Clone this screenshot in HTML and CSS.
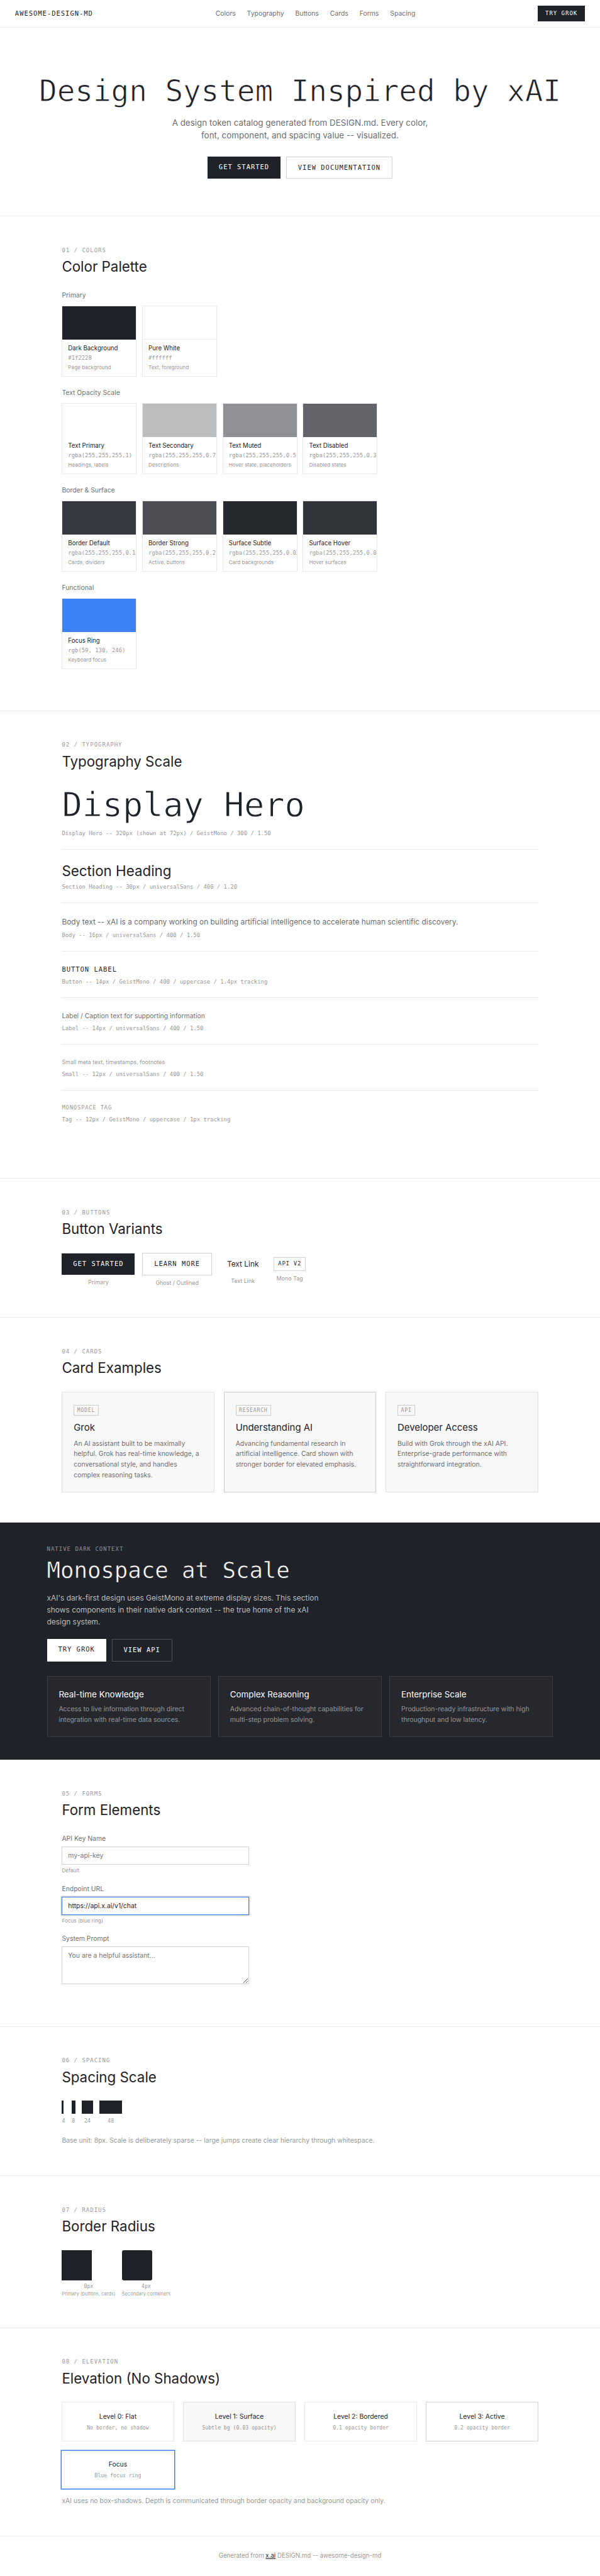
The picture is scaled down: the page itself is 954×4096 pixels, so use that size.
FILE: index.html
```html
<!DOCTYPE html>
<html lang="en">
<head>
    <meta charset="UTF-8">
    <meta name="viewport" content="width=device-width, initial-scale=1.0">
    <title>Design System Inspired by xAI</title>
    <link rel="stylesheet" href="styles.css">
</head>
<body>
<div class="page">
    <nav class="nav">
        <div class="nav-logo">awesome-design-md</div>
        <div class="nav-links">
            <a href="#colors">Colors</a>
            <a href="#typography">Typography</a>
            <a href="#buttons">Buttons</a>
            <a href="#cards">Cards</a>
            <a href="#forms">Forms</a>
            <a href="#spacing">Spacing</a>
        </div>
        <a class="btn btn-primary btn-small" href="#">Try Grok</a>
    </nav>

    <header class="hero">
        <h1>Design System Inspired by xAI</h1>
        <p>A design token catalog generated from DESIGN.md. Every color, font, component, and spacing value -- visualized.</p>
        <div class="hero-buttons">
            <a class="btn btn-primary" href="#">Get Started</a>
            <a class="btn btn-ghost" href="#">View Documentation</a>
        </div>
    </header>

    <!-- Colors -->
    <section class="section" id="colors">
        <div class="inner">
            <div class="section-label">01 / Colors</div>
            <h2>Color Palette</h2>

            <h3 class="group-title">Primary</h3>
            <div class="swatches">
                <div class="swatch">
                    <div class="swatch-color dark"></div>
                    <div class="swatch-info">
                        <div class="swatch-name">Dark Background</div>
                        <div class="swatch-hex">#1f2228</div>
                        <div class="swatch-role">Page background</div>
                    </div>
                </div>
                <div class="swatch">
                    <div class="swatch-color white lined"></div>
                    <div class="swatch-info">
                        <div class="swatch-name">Pure White</div>
                        <div class="swatch-hex">#ffffff</div>
                        <div class="swatch-role">Text, foreground</div>
                    </div>
                </div>
            </div>

            <h3 class="group-title">Text Opacity Scale</h3>
            <div class="swatches">
                <div class="swatch">
                    <div class="swatch-color white"></div>
                    <div class="swatch-info">
                        <div class="swatch-name">Text Primary</div>
                        <div class="swatch-hex">rgba(255,255,255,1)</div>
                        <div class="swatch-role">Headings, labels</div>
                    </div>
                </div>
                <div class="swatch">
                    <div class="swatch-color secondary"></div>
                    <div class="swatch-info">
                        <div class="swatch-name">Text Secondary</div>
                        <div class="swatch-hex">rgba(255,255,255,0.7)</div>
                        <div class="swatch-role">Descriptions</div>
                    </div>
                </div>
                <div class="swatch">
                    <div class="swatch-color muted"></div>
                    <div class="swatch-info">
                        <div class="swatch-name">Text Muted</div>
                        <div class="swatch-hex">rgba(255,255,255,0.5)</div>
                        <div class="swatch-role">Hover state, placeholders</div>
                    </div>
                </div>
                <div class="swatch">
                    <div class="swatch-color disabled"></div>
                    <div class="swatch-info">
                        <div class="swatch-name">Text Disabled</div>
                        <div class="swatch-hex">rgba(255,255,255,0.3)</div>
                        <div class="swatch-role">Disabled states</div>
                    </div>
                </div>
            </div>

            <h3 class="group-title">Border &amp; Surface</h3>
            <div class="swatches">
                <div class="swatch">
                    <div class="swatch-color border-default"></div>
                    <div class="swatch-info">
                        <div class="swatch-name">Border Default</div>
                        <div class="swatch-hex">rgba(255,255,255,0.1)</div>
                        <div class="swatch-role">Cards, dividers</div>
                    </div>
                </div>
                <div class="swatch">
                    <div class="swatch-color border-strong"></div>
                    <div class="swatch-info">
                        <div class="swatch-name">Border Strong</div>
                        <div class="swatch-hex">rgba(255,255,255,0.2)</div>
                        <div class="swatch-role">Active, buttons</div>
                    </div>
                </div>
                <div class="swatch">
                    <div class="swatch-color surface-subtle"></div>
                    <div class="swatch-info">
                        <div class="swatch-name">Surface Subtle</div>
                        <div class="swatch-hex">rgba(255,255,255,0.03)</div>
                        <div class="swatch-role">Card backgrounds</div>
                    </div>
                </div>
                <div class="swatch">
                    <div class="swatch-color surface-hover"></div>
                    <div class="swatch-info">
                        <div class="swatch-name">Surface Hover</div>
                        <div class="swatch-hex">rgba(255,255,255,0.08)</div>
                        <div class="swatch-role">Hover surfaces</div>
                    </div>
                </div>
            </div>

            <h3 class="group-title">Functional</h3>
            <div class="swatches">
                <div class="swatch">
                    <div class="swatch-color focus"></div>
                    <div class="swatch-info">
                        <div class="swatch-name">Focus Ring</div>
                        <div class="swatch-hex">rgb(59, 130, 246)</div>
                        <div class="swatch-role">Keyboard focus</div>
                    </div>
                </div>
            </div>
        </div>
    </section>

    <!-- Typography -->
    <section class="section" id="typography">
        <div class="inner">
            <div class="section-label">02 / Typography</div>
            <h2>Typography Scale</h2>
            <div class="type-item">
                <div class="type-display">Display Hero</div>
                <div class="type-meta">Display Hero -- 320px (shown at 72px) / GeistMono / 300 / 1.50</div>
            </div>
            <div class="type-item">
                <div class="type-heading">Section Heading</div>
                <div class="type-meta">Section Heading -- 30px / universalSans / 400 / 1.20</div>
            </div>
            <div class="type-item">
                <div class="type-body">Body text -- xAI is a company working on building artificial intelligence to accelerate human scientific discovery.</div>
                <div class="type-meta">Body -- 16px / universalSans / 400 / 1.50</div>
            </div>
            <div class="type-item">
                <div class="type-button">Button Label</div>
                <div class="type-meta">Button -- 14px / GeistMono / 400 / uppercase / 1.4px tracking</div>
            </div>
            <div class="type-item">
                <div class="type-label">Label / Caption text for supporting information</div>
                <div class="type-meta">Label -- 14px / universalSans / 400 / 1.50</div>
            </div>
            <div class="type-item">
                <div class="type-small">Small meta text, timestamps, footnotes</div>
                <div class="type-meta">Small -- 12px / universalSans / 400 / 1.50</div>
            </div>
            <div class="type-item">
                <div class="type-tag">Monospace Tag</div>
                <div class="type-meta">Tag -- 12px / GeistMono / uppercase / 1px tracking</div>
            </div>
        </div>
    </section>

    <!-- Buttons -->
    <section class="section" id="buttons">
        <div class="inner">
            <div class="section-label">03 / Buttons</div>
            <h2>Button Variants</h2>
            <div class="button-row">
                <div class="button-item">
                    <a class="btn btn-primary" href="#">Get Started</a>
                    <span class="button-caption">Primary</span>
                </div>
                <div class="button-item">
                    <a class="btn btn-ghost" href="#">Learn More</a>
                    <span class="button-caption">Ghost / Outlined</span>
                </div>
                <div class="button-item">
                    <a class="text-link" href="#">Text Link</a>
                    <span class="button-caption">Text Link</span>
                </div>
                <div class="button-item">
                    <span class="mono-tag">API v2</span>
                    <span class="button-caption">Mono Tag</span>
                </div>
            </div>
        </div>
    </section>

    <!-- Cards -->
    <section class="section" id="cards">
        <div class="inner">
            <div class="section-label">04 / Cards</div>
            <h2>Card Examples</h2>
            <div class="cards">
                <div class="card">
                    <span class="card-tag">Model</span>
                    <h3>Grok</h3>
                    <p>An AI assistant built to be maximally helpful. Grok has real-time knowledge, a conversational style, and handles complex reasoning tasks.</p>
                </div>
                <div class="card card-strong">
                    <span class="card-tag">Research</span>
                    <h3>Understanding AI</h3>
                    <p>Advancing fundamental research in artificial intelligence. Card shown with stronger border for elevated emphasis.</p>
                </div>
                <div class="card">
                    <span class="card-tag">API</span>
                    <h3>Developer Access</h3>
                    <p>Build with Grok through the xAI API. Enterprise-grade performance with straightforward integration.</p>
                </div>
            </div>
        </div>
    </section>

    <!-- Dark context -->
    <section class="dark-section">
        <div class="dark-inner">
            <div class="section-label">Native Dark Context</div>
            <h2>Monospace at Scale</h2>
            <p class="dark-text">xAI's dark-first design uses GeistMono at extreme display sizes. This section shows components in their native dark context -- the true home of the xAI design system.</p>
            <div class="dark-buttons">
                <a class="btn btn-white" href="#">Try Grok</a>
                <a class="btn btn-ghost-dark" href="#">View API</a>
            </div>
            <div class="dark-cards">
                <div class="dark-card">
                    <h3>Real-time Knowledge</h3>
                    <p>Access to live information through direct integration with real-time data sources.</p>
                </div>
                <div class="dark-card">
                    <h3>Complex Reasoning</h3>
                    <p>Advanced chain-of-thought capabilities for multi-step problem solving.</p>
                </div>
                <div class="dark-card">
                    <h3>Enterprise Scale</h3>
                    <p>Production-ready infrastructure with high throughput and low latency.</p>
                </div>
            </div>
        </div>
    </section>

    <!-- Forms -->
    <section class="section" id="forms">
        <div class="inner">
            <div class="section-label">05 / Forms</div>
            <h2>Form Elements</h2>
            <div class="form">
                <div class="field">
                    <label for="key">API Key Name</label>
                    <input type="text" id="key" placeholder="my-api-key">
                    <div class="hint">Default</div>
                </div>
                <div class="field">
                    <label for="url">Endpoint URL</label>
                    <input type="text" id="url" class="focused" value="https://api.x.ai/v1/chat">
                    <div class="hint">Focus (blue ring)</div>
                </div>
                <div class="field">
                    <label for="prompt">System Prompt</label>
                    <textarea id="prompt" placeholder="You are a helpful assistant..."></textarea>
                </div>
            </div>
        </div>
    </section>

    <!-- Spacing -->
    <section class="section" id="spacing">
        <div class="inner">
            <div class="section-label">06 / Spacing</div>
            <h2>Spacing Scale</h2>
            <div class="spacing-row">
                <div class="space-item"><div class="space-bar w4"></div>4</div>
                <div class="space-item"><div class="space-bar w8"></div>8</div>
                <div class="space-item"><div class="space-bar w24"></div>24</div>
                <div class="space-item"><div class="space-bar w48"></div>48</div>
            </div>
            <p class="note note-spacing">Base unit: 8px. Scale is deliberately sparse -- large jumps create clear hierarchy through whitespace.</p>
        </div>
    </section>

    <!-- Radius -->
    <section class="section" id="radius">
        <div class="inner">
            <div class="section-label">07 / Radius</div>
            <h2>Border Radius</h2>
            <div class="radius-row">
                <div class="radius-item">
                    <div class="radius-box"></div>
                    <div class="radius-value">0px</div>
                    <div class="radius-use">Primary (buttons, cards)</div>
                </div>
                <div class="radius-item">
                    <div class="radius-box rounded"></div>
                    <div class="radius-value">4px</div>
                    <div class="radius-use">Secondary containers</div>
                </div>
            </div>
        </div>
    </section>

    <!-- Elevation -->
    <section class="section" id="elevation">
        <div class="inner">
            <div class="section-label">08 / Elevation</div>
            <h2>Elevation (No Shadows)</h2>
            <div class="levels">
                <div class="level">
                    <div class="level-name">Level 0: Flat</div>
                    <div class="level-meta">No border, no shadow</div>
                </div>
                <div class="level level-surface">
                    <div class="level-name">Level 1: Surface</div>
                    <div class="level-meta">Subtle bg (0.03 opacity)</div>
                </div>
                <div class="level">
                    <div class="level-name">Level 2: Bordered</div>
                    <div class="level-meta">0.1 opacity border</div>
                </div>
                <div class="level level-active">
                    <div class="level-name">Level 3: Active</div>
                    <div class="level-meta">0.2 opacity border</div>
                </div>
                <div class="level level-focus">
                    <div class="level-name">Focus</div>
                    <div class="level-meta">Blue focus ring</div>
                </div>
            </div>
            <p class="note">xAI uses no box-shadows. Depth is communicated through border opacity and background opacity only.</p>
        </div>
    </section>

    <footer class="footer">
        Generated from <a href="#">x.ai</a> DESIGN.md -- awesome-design-md
    </footer>
</div>
</body>
</html>
```

FILE: styles.css
```css
:root {
    --dark: #1f2228;
    --text-secondary: rgba(31, 34, 40, 0.7);
    --text-muted: rgba(31, 34, 40, 0.5);
    --border: rgba(31, 34, 40, 0.1);
    --border-strong: rgba(31, 34, 40, 0.2);
    --surface: rgba(31, 34, 40, 0.03);
    --focus: rgb(59, 130, 246);
    --sans: Inter, "Liberation Sans", sans-serif;
    --mono: "DejaVu Sans Mono", "Liberation Mono", monospace;
}

* {
    box-sizing: border-box;
    margin: 0;
    padding: 0;
}

body {
    font-family: var(--sans);
    font-size: 16px;
    line-height: 1.5;
    color: var(--dark);
    background: #fff;
}

/* sizes below are for a 1280px wide page */
.page {
    zoom: 0.7453;
}

a {
    color: inherit;
    text-decoration: none;
}

h1, h2, h3 {
    font-weight: 400;
}

/* Nav */
.nav {
    display: flex;
    justify-content: space-between;
    align-items: center;
    padding: 12px 32px 11.7px;
    border-bottom: 1px solid var(--border);
}

.nav-logo {
    font-family: var(--mono);
    font-size: 14px;
    letter-spacing: 1.37px;
    text-transform: uppercase;
}

.nav-links {
    display: flex;
    gap: 24px;
    font-size: 14px;
    color: var(--text-secondary);
}

/* Buttons */
.btn {
    display: block;
    padding: 12px 24px;
    font-family: var(--mono);
    font-size: 14px;
    letter-spacing: 1.37px;
    text-transform: uppercase;
    white-space: nowrap;
}

.btn-primary {
    background: var(--dark);
    color: #fff;
}

.btn-small {
    padding: 8px 16px;
    font-size: 12px;
}

.btn-ghost {
    border: 1px solid var(--border-strong);
}

.btn-white {
    background: #fff;
    color: var(--dark);
}

.btn-ghost-dark {
    border: 1px solid rgba(255, 255, 255, 0.2);
    color: #fff;
}

/* Hero */
.hero {
    padding: 96px 32px 79.3px;
    text-align: center;
    border-bottom: 1px solid var(--border);
}

.hero h1 {
    margin-bottom: 16px;
    font-family: var(--mono);
    font-size: 64px;
    line-height: 1.2;
    letter-spacing: -0.13px;
    white-space: nowrap;
    -webkit-text-stroke: 1.2px #fff;
}

.hero p {
    max-width: 560px;
    margin: 0 auto 32px;
    font-size: 18px;
    color: var(--text-secondary);
}

.hero-buttons {
    display: flex;
    justify-content: center;
    gap: 12px;
}

/* Sections */
.section {
    padding: 64px 0 63.7px;
    border-bottom: 1px solid var(--border);
}

.inner {
    max-width: 1080px;
    margin: 0 auto;
    padding: 0 32px;
}

.section-label {
    margin-bottom: 8px;
    font-family: var(--mono);
    font-size: 12px;
    letter-spacing: 1.38px;
    text-transform: uppercase;
    color: var(--text-muted);
}

.section h2 {
    margin-bottom: 32px;
    font-size: 30px;
    line-height: 1.2;
}

/* Color swatches */
.group-title {
    margin-bottom: 10.5px;
    font-size: 14px;
    color: var(--text-secondary);
}

.swatches {
    display: grid;
    grid-template-columns: repeat(6, 1fr);
    gap: 12px;
    margin-bottom: 24px;
}

.swatch {
    height: 152.5px;
    border: 1px solid var(--border);
    overflow: hidden;
}

.swatch-color {
    height: 72px;
}

.swatch-color.dark { background: #1f2228; }
.swatch-color.white { background: #fff; }
.swatch-color.lined { border-bottom: 1px solid var(--border); }
.swatch-color.secondary { background: #bcbdbf; }
.swatch-color.muted { background: #8f9194; }
.swatch-color.disabled { background: #626469; }
.swatch-color.border-default { background: #35383e; }
.swatch-color.border-strong { background: #4c4e53; }
.swatch-color.surface-subtle { background: #26292e; }
.swatch-color.surface-hover { background: #313439; }
.swatch-color.focus { background: var(--focus); }

.swatch-info {
    padding: 9.5px 12px;
}

.swatch-name {
    font-size: 13px;
}

.swatch-hex {
    margin: 1.5px 0 2.5px;
    font-family: var(--mono);
    font-size: 12px;
    letter-spacing: -0.03px;
    color: var(--text-muted);
}

.swatch-role {
    font-size: 11px;
    color: var(--text-muted);
    white-space: nowrap;
}

/* Type scale */
.type-item {
    margin-bottom: 28px;
    padding-bottom: 23.7px;
    border-bottom: 1px solid var(--border);
}

.type-item:last-child {
    border-bottom: none;
}

.type-meta {
    margin-top: 8px;
    font-family: var(--mono);
    font-size: 12px;
    letter-spacing: -0.03px;
    color: var(--text-muted);
}

.type-display {
    font-family: var(--mono);
    font-size: 72px;
    line-height: 1.2;
    letter-spacing: -0.15px;
    -webkit-text-stroke: 1.3px #fff;
}

.type-heading {
    font-size: 30px;
    line-height: 1.2;
}

.type-body {
    color: var(--text-secondary);
}

.type-button {
    font-family: var(--mono);
    font-size: 14px;
    line-height: 20px;
    letter-spacing: 1.37px;
    text-transform: uppercase;
}

.type-label {
    font-size: 14px;
    color: var(--text-secondary);
}

.type-small {
    font-size: 12px;
    color: var(--text-muted);
}

.type-tag {
    font-family: var(--mono);
    font-size: 12px;
    letter-spacing: 1px;
    text-transform: uppercase;
    color: var(--text-muted);
}

/* Button variants */
.button-row {
    display: flex;
    align-items: center;
    gap: 16px;
}

.button-item {
    display: flex;
    flex-direction: column;
    align-items: center;
    gap: 7.5px;
}

.button-caption {
    font-size: 12px;
    color: var(--text-muted);
}

.text-link {
    padding: 8px 16px;
}

.mono-tag {
    padding: 4px 8px;
    border: 1px solid var(--border-strong);
    font-family: var(--mono);
    font-size: 12px;
    letter-spacing: 1px;
    text-transform: uppercase;
}

/* Cards */
.cards {
    display: grid;
    grid-template-columns: repeat(3, 1fr);
    gap: 20px;
}

.card {
    padding: 26.5px 24px 23.3px;
    background: var(--surface);
    border: 1px solid var(--border);
}

.card-strong {
    border-color: var(--border-strong);
}

.card-tag {
    display: block;
    width: fit-content;
    margin-bottom: 11.5px;
    padding: 2px 6px;
    border: 1px solid var(--border-strong);
    font-family: var(--mono);
    font-size: 11px;
    letter-spacing: 1px;
    text-transform: uppercase;
    color: var(--text-muted);
}

.card h3 {
    margin-bottom: 8px;
    font-size: 20px;
}

.card p {
    font-size: 14px;
    line-height: 1.6;
    color: var(--text-secondary);
}

/* Dark section */
.dark-section {
    padding: 48px 32px;
    background: var(--dark);
    color: #fff;
    border-bottom: 1px solid var(--border);
}

.dark-inner {
    max-width: 1080px;
    margin: 0 auto;
}

.dark-section .section-label {
    color: rgba(255, 255, 255, 0.5);
}

.dark-section h2 {
    margin-bottom: 16px;
    font-family: var(--mono);
    font-size: 48px;
    line-height: 1.2;
    letter-spacing: -0.1px;
    -webkit-text-stroke: 0.8px var(--dark);
}

.dark-text {
    max-width: 600px;
    margin-bottom: 24px;
    line-height: 1.6;
    color: rgba(255, 255, 255, 0.7);
}

.dark-buttons {
    display: flex;
    gap: 12px;
    margin-bottom: 31.4px;
}

.dark-cards {
    display: grid;
    grid-template-columns: repeat(3, 1fr);
    gap: 16px;
}

.dark-card {
    padding: 23.7px 24px 23.3px;
    background: rgba(255, 255, 255, 0.03);
    border: 1px solid rgba(255, 255, 255, 0.1);
}

.dark-card h3 {
    margin-bottom: 8px;
    font-size: 18px;
}

.dark-card p {
    font-size: 14px;
    line-height: 1.6;
    color: rgba(255, 255, 255, 0.5);
}

/* Forms */
.form {
    max-width: 400px;
}

.field {
    margin-bottom: 20px;
}

.field:last-child {
    margin-bottom: 26.2px;
}

.field label {
    display: block;
    margin-bottom: 6px;
    font-size: 14px;
    color: var(--text-secondary);
}

.field input,
.field textarea {
    display: block;
    width: 100%;
    height: 39px;
    padding: 10px 12px;
    border: 1px solid var(--border-strong);
    border-radius: 0;
    background: #fff;
    color: var(--dark);
    font-family: var(--sans);
    font-size: 14px;
    outline: none;
}

.field textarea {
    height: 80px;
    resize: vertical;
}

.field input.focused {
    border-color: var(--focus);
    box-shadow: 0 0 0 2px var(--border-strong);
}

.hint {
    margin-top: 4px;
    font-size: 11px;
    color: var(--text-muted);
}

/* Spacing */
.spacing-row {
    display: flex;
    gap: 14px;
}

.space-item {
    font-family: var(--mono);
    font-size: 11px;
    text-align: center;
    color: var(--text-muted);
}

.space-bar {
    height: 28px;
    margin-bottom: 6px;
    background: var(--dark);
}

.w4 { width: 4px; }
.w8 { width: 8px; }
.w24 { width: 24px; }
.w48 { width: 48px; }

.note {
    margin-top: 16px;
    font-size: 14px;
    color: var(--text-muted);
}

.note-spacing {
    margin-top: 24.4px;
}

/* Radius */
.radius-row {
    display: flex;
    gap: 14px;
}

.radius-item {
    text-align: center;
    color: var(--text-muted);
}

.radius-box {
    width: 64px;
    height: 64px;
    margin-bottom: 6px;
    background: var(--dark);
}

.radius-box.rounded {
    border-radius: 4px;
}

.radius-value {
    font-family: var(--mono);
    font-size: 11px;
    line-height: 16px;
}

.radius-use {
    font-size: 10px;
}

/* Elevation */
.levels {
    display: grid;
    grid-template-columns: repeat(4, 1fr);
    gap: 20px;
}

.level {
    padding: 20px 16px 19.5px;
    border: 1px solid var(--border);
    text-align: center;
}

.level-surface {
    background: var(--surface);
}

.level-active {
    border-color: var(--border-strong);
}

.level-focus {
    border: none;
    box-shadow: 0 0 0 2px var(--focus);
}

.level-name {
    margin-bottom: 4px;
    font-size: 14px;
}

.level-meta {
    font-family: var(--mono);
    font-size: 11px;
    color: var(--text-muted);
}

/* Footer */
.footer {
    padding: 32px 32px 28px;
    font-size: 13px;
    text-align: center;
    color: var(--text-muted);
}

.footer a {
    color: var(--dark);
    text-decoration: underline;
}
```
